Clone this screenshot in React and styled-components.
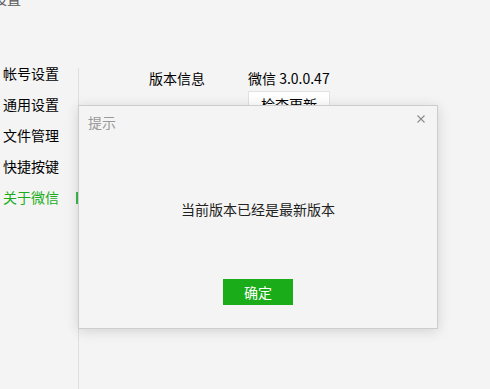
import React from 'react';
import styled, { createGlobalStyle } from 'styled-components';

const GlobalStyle = createGlobalStyle`
  html, body {
    margin: 0;
    padding: 0;
    background: #f4f4f4;
    font-family: "Noto Sans CJK SC", "Microsoft YaHei", sans-serif;
    overflow: hidden;
  }
`;

const Page = styled.div`
  position: relative;
  width: 490px;
  height: 389px;
  background: #f4f4f4;
  overflow: hidden;
`;

const WindowTitle = styled.div`
  margin: -9px 0 0 -7px;
  height: 14px;
  font-size: 14px;
  line-height: 14px;
  color: #555;
`;

const Main = styled.div`
  display: flex;
  align-items: flex-start;
  margin-top: 53px;
`;

const Sidebar = styled.ul`
  list-style: none;
  margin: 0;
  padding: 0;
  width: 78px;
  flex-shrink: 0;
`;

const NavItem = styled.li`
  position: relative;
  height: 31px;
  line-height: 31px;
  padding-left: 3px;
  font-size: 14px;
  color: ${p => (p.$active ? '#1aad19' : '#000')};

  &::after {
    content: '';
    display: ${p => (p.$active ? 'block' : 'none')};
    position: absolute;
    right: 0;
    top: 10px;
    width: 2px;
    height: 12px;
    background: #3bb84a;
  }
`;

const Content = styled.div`
  flex: 1;
  margin-top: 10px;
  height: 400px;
  border-left: 1px solid #dedede;
  padding-left: 70px;
`;

const InfoRow = styled.div`
  display: flex;
  align-items: flex-start;
  margin-top: 1px;
`;

const Label = styled.div`
  width: 99px;
  font-size: 14px;
  line-height: 18px;
  color: #000;
`;

const Value = styled.div`
  display: flex;
  flex-direction: column;
  align-items: flex-start;
  gap: 4px;
`;

const Version = styled.div`
  font-size: 14px;
  line-height: 18px;
  color: #000;
`;

const CheckButton = styled.button`
  width: 82px;
  height: 26px;
  background: #fff;
  border: 1px solid #e2e2e2;
  font-family: inherit;
  font-size: 14px;
  color: #000;
  padding: 0;
`;

const Dialog = styled.div`
  position: absolute;
  left: 78px;
  top: 105px;
  width: 358px;
  height: 222px;
  background: #f4f4f4;
  border: 1px solid #cdcdcd;
  box-shadow: 0 2px 12px rgba(0, 0, 0, 0.14);
  display: flex;
  flex-direction: column;
`;

const DialogHeader = styled.div`
  display: flex;
  justify-content: space-between;
  align-items: flex-start;
  height: 34px;
  padding: 0 12px 0 9px;
`;

const DialogTitle = styled.div`
  margin-top: 7px;
  font-size: 14px;
  line-height: 18px;
  color: #999;
`;

const CloseButton = styled.button`
  margin-top: 9px;
  width: 8px;
  height: 8px;
  padding: 0;
  border: 0;
  background: none;
  display: flex;
`;

const DialogBody = styled.div`
  flex: 1;
  display: flex;
  align-items: center;
  justify-content: center;
  font-size: 14px;
  color: #222;
  padding-bottom: 2px;
`;

const DialogFooter = styled.div`
  display: flex;
  justify-content: center;
  padding-bottom: 23px;
`;

const PrimaryButton = styled.button`
  width: 70px;
  height: 26px;
  border: 0;
  padding: 0;
  background: #1aad19;
  color: #fff;
  font-family: inherit;
  font-size: 14px;
`;

const navItems = ['帐号设置', '通用设置', '文件管理', '快捷按键', '关于微信'];

const App = () => {
  return (
    <>
      <GlobalStyle />
      <Page>
        <WindowTitle>设置</WindowTitle>
        <Main>
          <Sidebar>
            {navItems.map((item, i) => (
              <NavItem key={item} $active={i === navItems.length - 1}>
                {item}
              </NavItem>
            ))}
          </Sidebar>
          <Content>
            <InfoRow>
              <Label>版本信息</Label>
              <Value>
                <Version>微信 3.0.0.47</Version>
                <CheckButton>检查更新</CheckButton>
              </Value>
            </InfoRow>
          </Content>
        </Main>

        <Dialog>
          <DialogHeader>
            <DialogTitle>提示</DialogTitle>
            <CloseButton aria-label="关闭">
              <svg width="8" height="8" viewBox="0 0 8 8">
                <path d="M0.5 0.5L7.5 7.5M7.5 0.5L0.5 7.5" stroke="#8a8a8a" strokeWidth="1.1" fill="none" />
              </svg>
            </CloseButton>
          </DialogHeader>
          <DialogBody>当前版本已经是最新版本</DialogBody>
          <DialogFooter>
            <PrimaryButton>确定</PrimaryButton>
          </DialogFooter>
        </Dialog>
      </Page>
    </>
  );
};

export default App;
